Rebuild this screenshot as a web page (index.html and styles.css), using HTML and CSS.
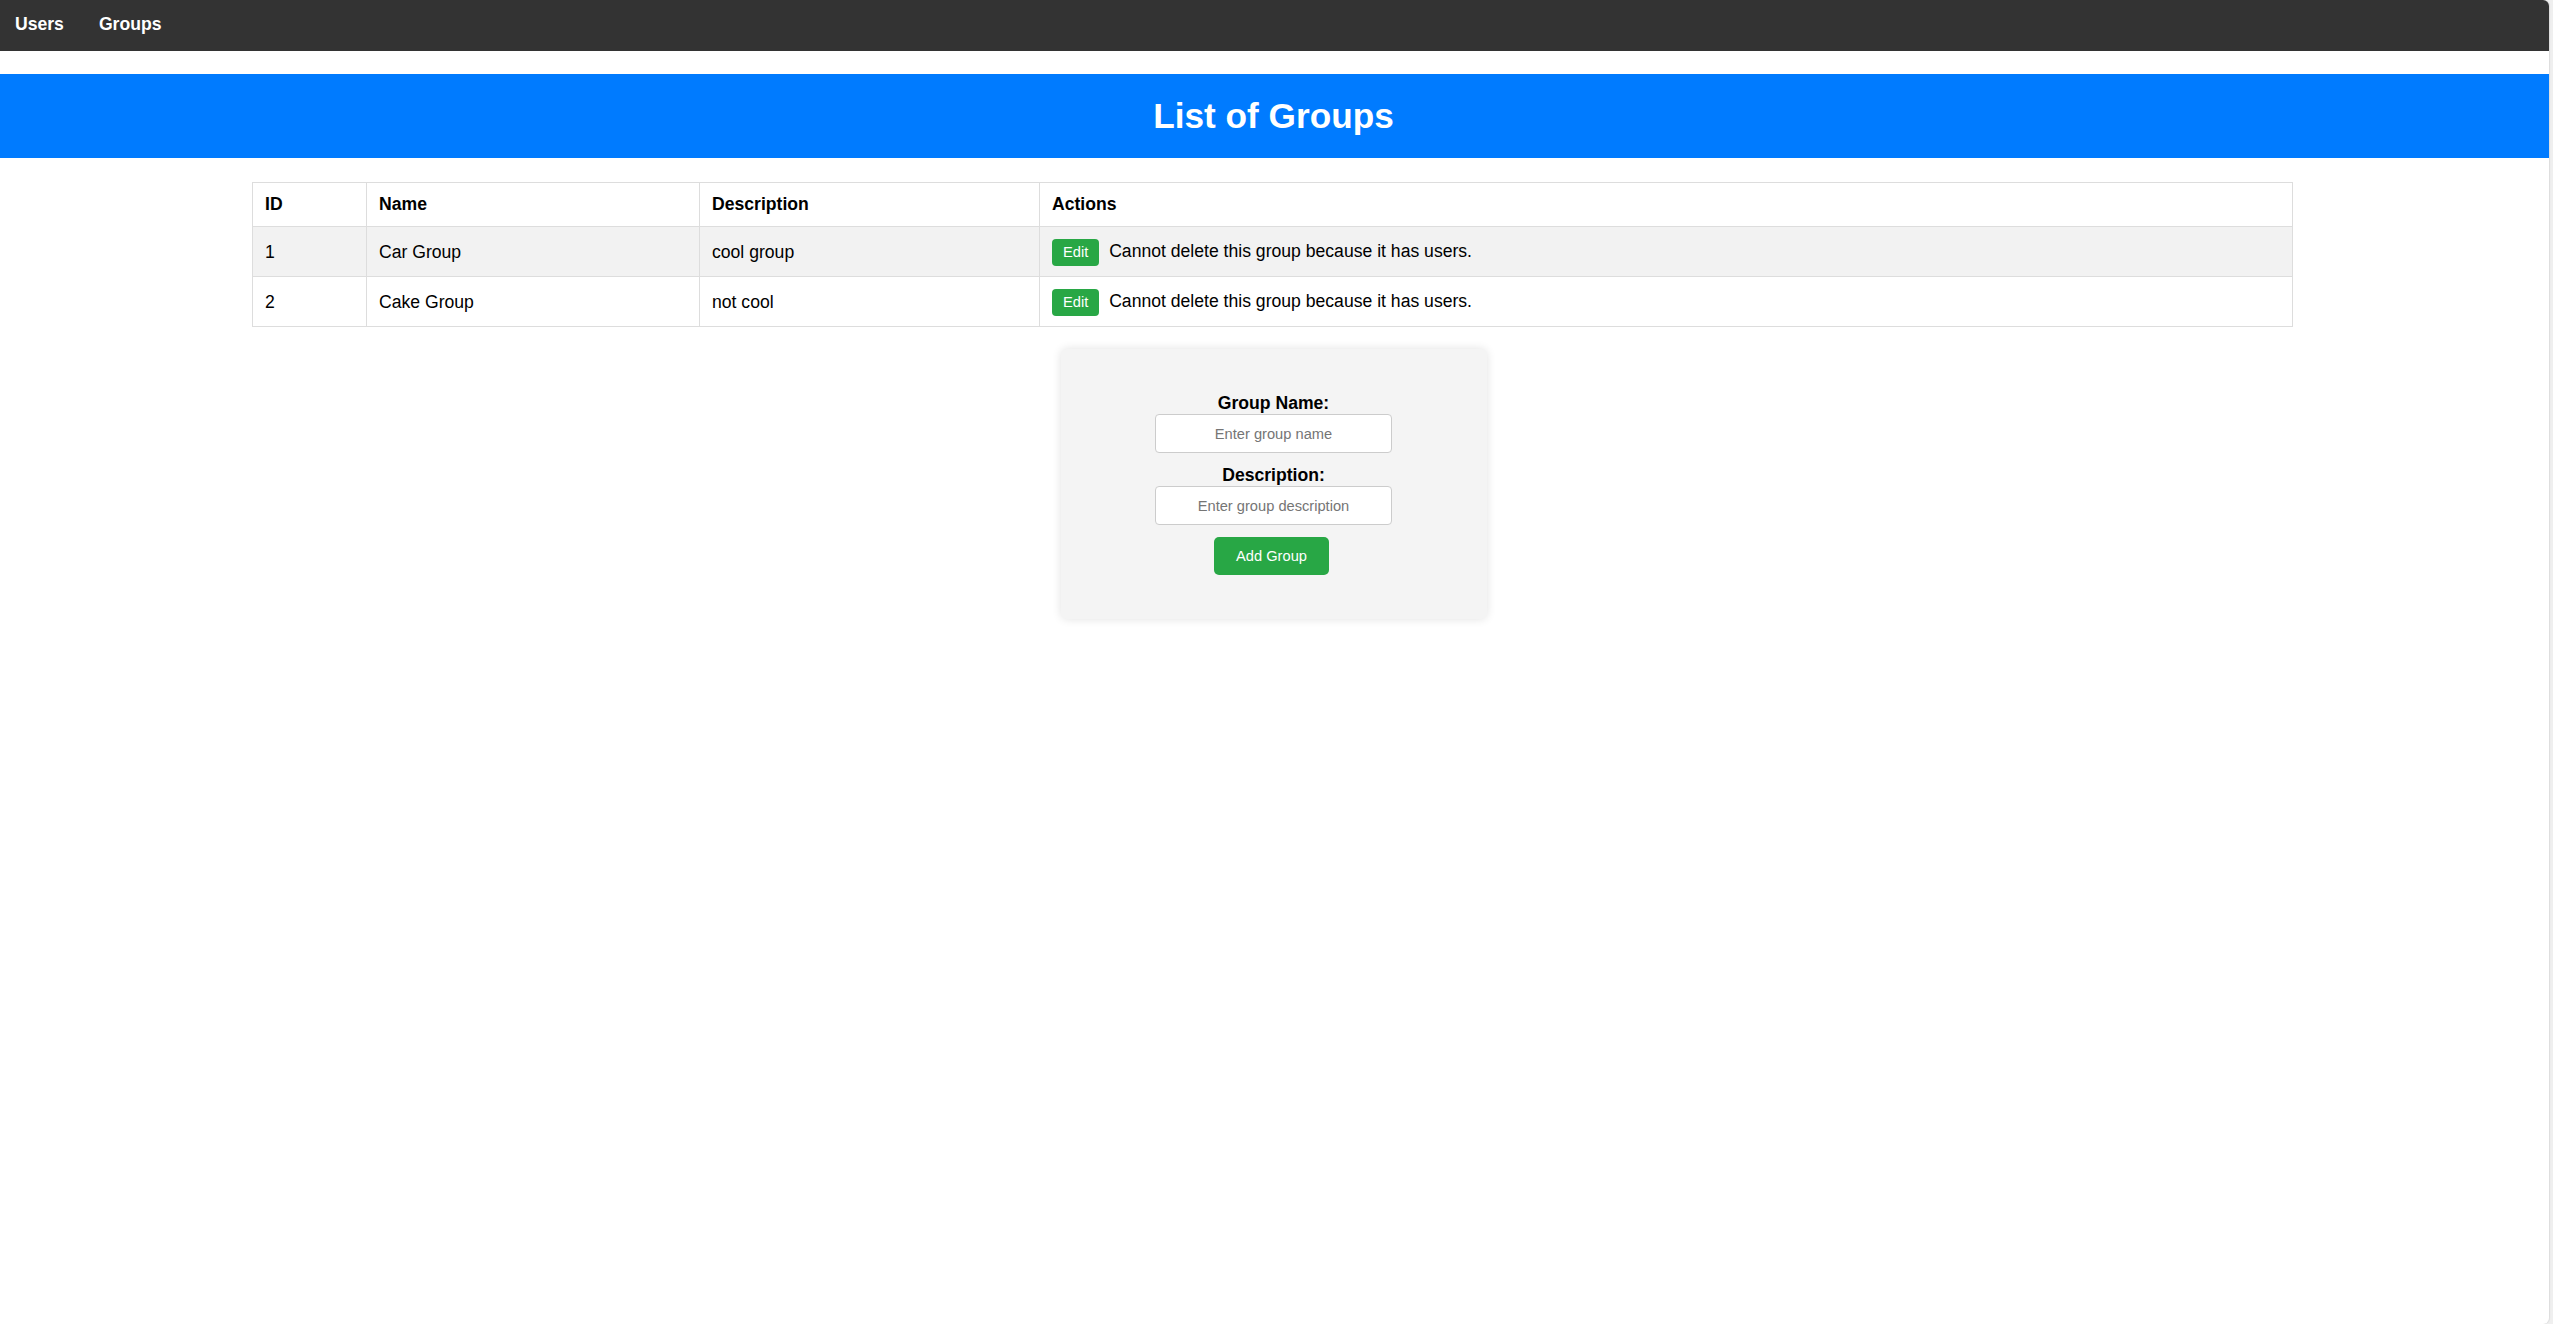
FILE: index.html
```html
<!DOCTYPE html>
<html lang="en">
<head>
<meta charset="utf-8">
<title>Groups</title>
<link rel="stylesheet" href="styles.css">
</head>
<body>
<div class="page">
  <nav class="navbar">
    <a class="nav-link" href="#">Users</a>
    <a class="nav-link" href="#">Groups</a>
  </nav>
  <header class="banner">
    <h1 class="banner-title">List of Groups</h1>
  </header>
  <table class="groups-table">
    <colgroup>
      <col class="col-id">
      <col class="col-name">
      <col class="col-desc">
      <col>
    </colgroup>
    <tr>
      <th>ID</th>
      <th>Name</th>
      <th>Description</th>
      <th>Actions</th>
    </tr>
    <tr>
      <td>1</td>
      <td>Car Group</td>
      <td>cool group</td>
      <td><button class="btn-edit">Edit</button> Cannot delete this group because it has users.</td>
    </tr>
    <tr>
      <td>2</td>
      <td>Cake Group</td>
      <td>not cool</td>
      <td><button class="btn-edit">Edit</button> Cannot delete this group because it has users.</td>
    </tr>
  </table>
  <form class="group-form">
    <label class="form-label" for="gname">Group Name:</label>
    <input class="form-input" id="gname" type="text" placeholder="Enter group name">
    <label class="form-label" for="gdesc">Description:</label>
    <input class="form-input" id="gdesc" type="text" placeholder="Enter group description">
    <button class="btn-add" type="button">Add Group</button>
  </form>
</div>
</body>
</html>
```
FILE: styles.css
```css
html {
  margin: 0;
  padding: 0;
  background: #efefef;
  height: 100%;
}
body {
  margin: 0;
  padding: 0;
  height: 100%;
  font-family: "Liberation Sans", Arial, sans-serif;
  font-size: 17.6px;
  color: #000;
}
.page {
  width: 2549px;
  min-height: 100%;
  background: #fff;
  border-radius: 0 6px 6px 0;
  overflow: hidden;
  box-shadow: 1px 0 1px rgba(0, 0, 0, 0.08);
}
.navbar {
  box-sizing: border-box;
  height: 51px;
  background: #333;
  display: flex;
  align-items: flex-start;
  padding: 14px 15px 0;
  gap: 35px;
}
.nav-link {
  color: #fff;
  font-weight: bold;
  text-decoration: none;
  line-height: 20px;
}
.banner {
  margin-top: 23px;
  background: #007bff;
  height: 84px;
  box-sizing: border-box;
  padding-top: 22px;
  text-align: center;
}
.banner-title {
  margin: 0;
  color: #fff;
  font-size: 35.2px;
  font-weight: bold;
  line-height: 40px;
  position: relative;
  left: -1px;
}
.groups-table {
  width: 2041px;
  margin: 24px auto 0;
  border-collapse: collapse;
  position: relative;
  left: -2px;
}
.col-id { width: 114px; }
.col-name { width: 333px; }
.col-desc { width: 340px; }
.groups-table th,
.groups-table td {
  border: 1px solid #ddd;
  padding: 11px 12px;
  text-align: left;
  line-height: 20px;
}
.groups-table th {
  font-weight: bold;
  padding-bottom: 12px;
}
.groups-table td {
  height: 50px;
  box-sizing: border-box;
  padding-top: 0;
  padding-bottom: 0;
}
.groups-table tr:nth-child(even) {
  background: #f2f2f2;
}
.btn-edit {
  font-family: "Liberation Sans", Arial, sans-serif;
  font-size: 14.67px;
  line-height: 17px;
  color: #fff;
  background: #28a745;
  border: none;
  border-radius: 4px;
  padding: 5px 11px;
  margin: -4px 5px -4px 0;
  vertical-align: middle;
}
.group-form {
  box-sizing: border-box;
  width: 426px;
  margin: 22px auto 0;
  padding: 44px 0;
  background: #f4f4f4;
  border-radius: 6px;
  box-shadow: 0 0 10px rgba(0, 0, 0, 0.12);
  display: flex;
  flex-direction: column;
  align-items: center;
  position: relative;
  left: -1px;
}
.form-label {
  font-weight: bold;
  line-height: 20px;
  margin-bottom: 1px;
}
.form-input {
  box-sizing: border-box;
  width: 237px;
  height: 39px;
  margin: 0 0 12px;
  border: 1px solid #ccc;
  border-radius: 4px;
  background: #fff;
  text-align: center;
  font-family: "Liberation Sans", Arial, sans-serif;
  font-size: 14.67px;
}
.form-input::placeholder {
  color: #757575;
}
.btn-add {
  box-sizing: border-box;
  height: 38px;
  padding: 0 22px;
  border: none;
  border-radius: 5px;
  background: #28a745;
  color: #fff;
  font-family: "Liberation Sans", Arial, sans-serif;
  font-size: 14.67px;
  position: relative;
  left: -2px;
}
```
